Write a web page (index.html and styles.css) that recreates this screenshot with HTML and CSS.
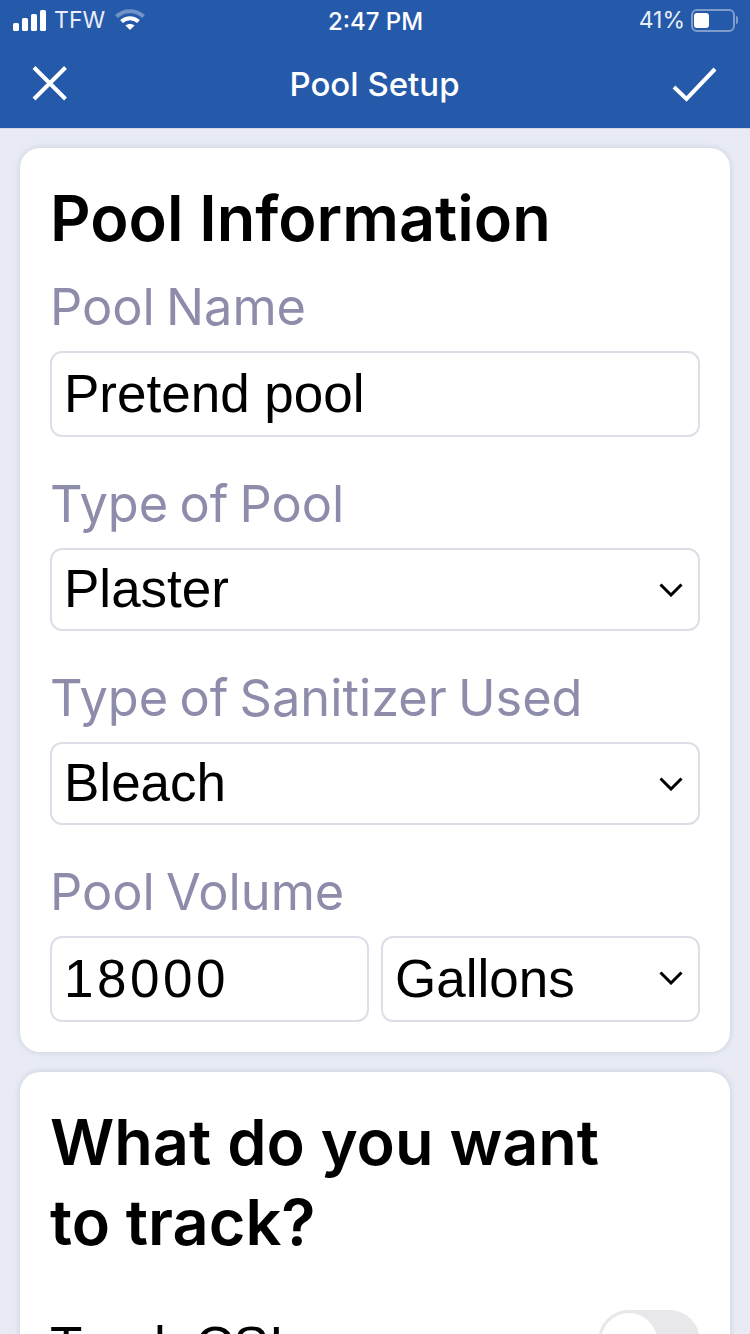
FILE: index.html
```html
<!DOCTYPE html>
<html lang="en">
<head>
    <meta charset="UTF-8">
    <meta name="viewport" content="width=device-width, initial-scale=1.0">
    <title>Pool Setup</title>
    <link rel="stylesheet" href="styles.css">
</head>
<body>
    <div class="top">
        <div class="status">
            <div class="status_left">
                <svg class="signal" width="33" height="21" viewBox="0 0 33 21" fill="#fff">
                    <rect x="0" y="13" width="6" height="8" rx="1.500"/>
                    <rect x="9" y="8" width="6" height="13" rx="1.500"/>
                    <rect x="18" y="4" width="6" height="17" rx="1.500"/>
                    <rect x="27" y="0" width="6" height="21" rx="1.500"/>
                </svg>
                <span>TFW</span>
                <svg class="wifi" width="30" height="22" viewBox="0 0 30 22" fill="none">
                    <path d="M1.500 7.500C9 0.500 21 0.500 28.500 7.500" stroke="#fff" stroke-opacity=".35" stroke-width="4"/>
                    <path d="M6.500 12.500C11.500 8 18.500 8 23.500 12.500" stroke="#fff" stroke-width="4"/>
                    <path d="M10.500 16.500L15 21L19.500 16.500C17 14.500 13 14.500 10.500 16.500Z" fill="#fff"/>
                </svg>
            </div>
            <div class="status_time">2:47 PM</div>
            <div class="status_right">
                <span>41%</span>
                <div class="battery"><i></i></div>
                <div class="battery_tip"></div>
            </div>
        </div>
        <div class="nav">
            <svg width="46" height="36" viewBox="0 0 46 36" stroke="#fff" stroke-width="4" fill="none">
                <path d="M2 1.500L33.500 33M33.500 1.500L2 33"/>
            </svg>
            <div class="nav_title">Pool Setup</div>
            <svg width="46" height="36" viewBox="0 0 46 36" stroke="#fff" stroke-width="4" fill="none">
                <path d="M3 21L15.500 33L44 3"/>
            </svg>
        </div>
    </div>

    <div class="content">
        <div class="card">
            <h2>Pool Information</h2>
            <div class="label">Pool Name</div>
            <div class="field tall">Pretend pool</div>
            <div class="label">Type of Pool</div>
            <div class="field select">
                Plaster
                <svg class="arrow" width="24" height="14" viewBox="0 0 24 14" fill="none" stroke="#000" stroke-width="3"><path d="M1.500 1.500L12 12L22.500 1.500"/></svg>
            </div>
            <div class="label">Type of Sanitizer Used</div>
            <div class="field select">
                Bleach
                <svg class="arrow" width="24" height="14" viewBox="0 0 24 14" fill="none" stroke="#000" stroke-width="3"><path d="M1.500 1.500L12 12L22.500 1.500"/></svg>
            </div>
            <div class="label">Pool Volume</div>
            <div class="row">
                <div class="field tall number">18000</div>
                <div class="field tall select">
                    Gallons
                    <svg class="arrow" width="24" height="14" viewBox="0 0 24 14" fill="none" stroke="#000" stroke-width="3"><path d="M1.500 1.500L12 12L22.500 1.500"/></svg>
                </div>
            </div>
        </div>

        <div class="card">
            <h2 class="track_title">What do you want to track?</h2>
            <div class="track_row">
                <span>Track CSI</span>
                <div class="switch"><i></i></div>
            </div>
        </div>
    </div>
</body>
</html>
```

FILE: styles.css
```css
*{box-sizing:border-box;padding:0;margin:0;}
html,body{width:750px;height:1334px;overflow:hidden;}
body{background:#e8ebf4;font-family:"Liberation Sans",Arial,sans-serif;color:#000;}
.top{height:129px;background:#2559aa;border-bottom:1px solid #d5d8e0;color:#fff;}
.status{display:flex;align-items:center;justify-content:space-between;height:40px;padding:0 12px 0 13px;font-family:Inter,sans-serif;font-size:23px;}
.status_left,.status_right{display:flex;align-items:center;width:220px;}
.status_left span{margin:0 10px 0 8px;letter-spacing:.1px;color:#e9eef7;}
.status_right{justify-content:flex-end;}
.status_right span{margin-right:6px;color:#e9eef7;}
.status_time{font-size:24px;font-weight:500;margin-top:2px;}
.battery{width:44px;height:23px;border:2px solid #7f9dcb;border-radius:6px;padding:2px 1px;}
.battery i{display:block;width:15px;height:15px;background:#fff;border-radius:3px;}
.battery_tip{width:2px;height:8px;margin-left:1px;background:#7f9dcb;border-radius:0 2px 2px 0;}
.nav{display:flex;align-items:center;justify-content:space-between;height:88px;padding:0 33px 0 32px;}
.nav_title{font-family:Inter,sans-serif;font-size:33px;font-weight:500;}
.content{padding:19px 20px 0;display:flex;flex-direction:column;gap:20px;}
.card{background:#fff;border-radius:20px;padding:32px 30px 30px;box-shadow:0 0 6px rgba(60,70,110,.18);}
h2{font-family:Inter,sans-serif;font-size:63px;font-weight:600;line-height:76px;}
.label{font-family:Inter,sans-serif;font-size:50.500px;line-height:60px;word-spacing:-3px;color:#8e8cab;margin-top:37px;}
h2 + .label{margin-top:21px;}
.field{position:relative;display:flex;align-items:center;height:83px;padding:0 12px 2px;margin-top:14px;border:2px solid #dedde8;border-radius:12px;font-size:53px;background:#fff;}
.field.tall{height:86px;}
.field.number{letter-spacing:3.500px;}
.arrow{position:absolute;right:15px;top:33px;}
.row{display:flex;gap:12px;}
.row .field{flex:1;}
.track_title{width:600px;line-height:80px;margin-top:-2px;}
.track_row{display:flex;align-items:center;justify-content:space-between;margin-top:43px;font-size:53px;}
.track_row span{padding-top:10px;}
.switch{width:102px;height:62px;background:#e8e8ea;border-radius:31px;padding:3px;}
.switch i{display:block;width:56px;height:56px;background:#fff;border-radius:50%;}
```
